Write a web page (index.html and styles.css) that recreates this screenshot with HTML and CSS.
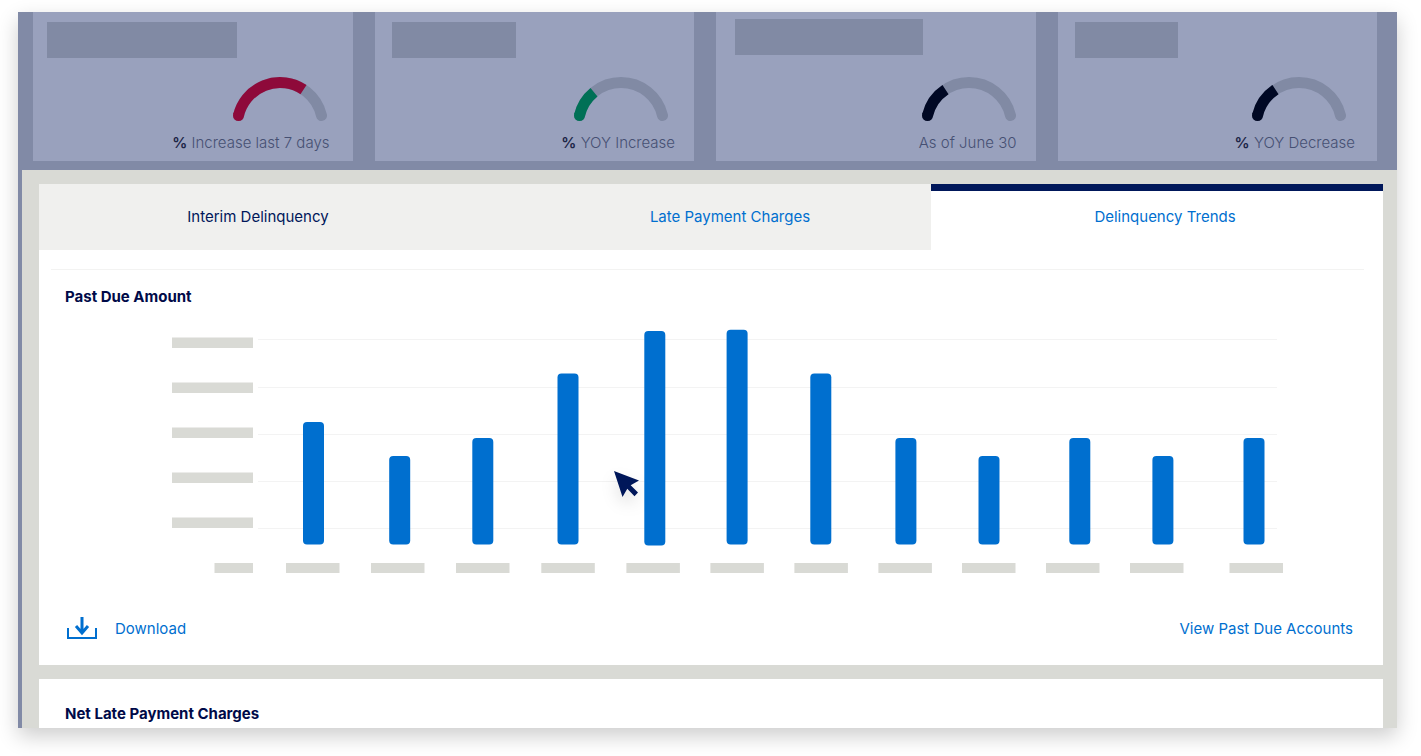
FILE: index.html
```html
<!DOCTYPE html>
<html lang="en">
<head>
<meta charset="utf-8">
<meta name="viewport" content="width=device-width, initial-scale=1">
<title>Delinquency Trends</title>
<link rel="stylesheet" href="styles.css">
</head>
<body>
<div class="frame">
  <section class="stats" aria-label="Summary">
    <article class="stat stat-first">
      <div class="placeholder placeholder-xl"></div>
      <svg class="gauge" viewBox="0 0 94 45" aria-hidden="true">
        <path class="track" d="M5.500 38.500A42.600 42.600 0 0 1 88.500 38.500"/>
        <path class="value red" d="M5.500 38.500A42.600 42.600 0 0 1 70.500 12.600"/>
        <circle class="red-fill" cx="5.500" cy="38.500" r="5.500"/>
      </svg>
      <p class="caption"><b>%</b> Increase last 7 days</p>
    </article>
    <article class="stat stat-second">
      <div class="placeholder placeholder-md"></div>
      <svg class="gauge" viewBox="0 0 94 45" aria-hidden="true">
        <path class="track" d="M5.500 38.500A42.600 42.600 0 0 1 88.500 38.500"/>
        <path class="value green" d="M5.500 38.500A42.600 42.600 0 0 1 20 15.200"/>
        <circle class="green-fill" cx="5.500" cy="38.500" r="5.500"/>
      </svg>
      <p class="caption"><b>%</b> YOY Increase</p>
    </article>
    <article class="stat stat-third">
      <div class="placeholder placeholder-lg"></div>
      <svg class="gauge" viewBox="0 0 94 45" aria-hidden="true">
        <path class="track" d="M5.500 38.500A42.600 42.600 0 0 1 88.500 38.500"/>
        <path class="value navy" d="M5.500 38.500A42.600 42.600 0 0 1 23.500 12.600"/>
        <circle class="navy-fill" cx="5.500" cy="38.500" r="5.500"/>
      </svg>
      <p class="caption">As of June 30</p>
    </article>
    <article class="stat stat-fourth">
      <div class="placeholder placeholder-sm"></div>
      <svg class="gauge" viewBox="0 0 94 45" aria-hidden="true">
        <path class="track" d="M5.500 38.500A42.600 42.600 0 0 1 88.500 38.500"/>
        <path class="value navy" d="M5.500 38.500A42.600 42.600 0 0 1 23.500 12.600"/>
        <circle class="navy-fill" cx="5.500" cy="38.500" r="5.500"/>
      </svg>
      <p class="caption"><b>%</b> YOY Decrease</p>
    </article>
  </section>

  <main class="content">
    <section class="panel">
      <div class="tabs" role="tablist">
        <button class="tab tab-interim" type="button" role="tab" aria-selected="false">Interim Delinquency</button>
        <button class="tab tab-late" type="button" role="tab" aria-selected="false">Late Payment Charges</button>
        <button class="tab tab-active" type="button" role="tab" aria-selected="true">Delinquency Trends</button>
      </div>
      <div class="report">
        <h2 class="title">Past Due Amount</h2>
        <svg class="chart" viewBox="172 324 1111 256" role="img" aria-label="Past due amount by month">
          <g class="grid">
            <path d="M258 339.500H1277M258 387.500H1277M258 434.500H1277M258 481.500H1277M258 528.500H1277"/>
          </g>
          <g class="label">
            <rect x="172" y="337.500" width="81" height="10.500"/>
            <rect x="172" y="382.500" width="81" height="10.500"/>
            <rect x="172" y="427.500" width="81" height="10.500"/>
            <rect x="172" y="472.500" width="81" height="10.500"/>
            <rect x="172" y="517.500" width="81" height="10.500"/>
            <rect x="214.500" y="563" width="38.500" height="10"/>
            <rect x="286" y="563" width="53.500" height="10"/>
            <rect x="371" y="563" width="53.500" height="10"/>
            <rect x="456" y="563" width="53.500" height="10"/>
            <rect x="541.300" y="563" width="53.500" height="10"/>
            <rect x="626.400" y="563" width="53.500" height="10"/>
            <rect x="710.400" y="563" width="53.500" height="10"/>
            <rect x="794.400" y="563" width="53.500" height="10"/>
            <rect x="878.400" y="563" width="53.500" height="10"/>
            <rect x="962" y="563" width="53.500" height="10"/>
            <rect x="1046" y="563" width="53.500" height="10"/>
            <rect x="1130" y="563" width="53.500" height="10"/>
            <rect x="1229.500" y="563" width="53.500" height="10"/>
          </g>
          <g class="bar">
            <rect x="303" y="422" width="21" height="122.500" rx="4"/>
            <rect x="389.200" y="456" width="21" height="88.500" rx="4"/>
            <rect x="472.300" y="438" width="21" height="106.500" rx="4"/>
            <rect x="557.500" y="373.400" width="21" height="171" rx="4"/>
            <rect x="644.300" y="331" width="21" height="214.500" rx="4"/>
            <rect x="726.600" y="329.700" width="21" height="214.700" rx="4"/>
            <rect x="810.300" y="373.400" width="21" height="171" rx="4"/>
            <rect x="895.400" y="438" width="21" height="106.500" rx="4"/>
            <rect x="978.500" y="456" width="21" height="88.500" rx="4"/>
            <rect x="1069.300" y="438" width="21" height="106.500" rx="4"/>
            <rect x="1152.400" y="456" width="21" height="88.500" rx="4"/>
            <rect x="1243.500" y="438" width="21" height="106.500" rx="4"/>
          </g>
          <path class="cursor" d="M614 471L639 480.500L630.700 485.200L638 492.500L634.500 496.300L627.300 488.800L622.500 497Z"/>
        </svg>
        <footer class="actions">
          <a class="link download" href="#download">
            <svg class="download-icon" viewBox="0 0 32 24" aria-hidden="true">
              <path class="tray" d="M2 11V21H30V11"/>
              <path class="arrow" d="M16 0V15M10 9L16 16L22 9"/>
            </svg>
            Download
          </a>
          <a class="link" href="#accounts">View Past Due Accounts</a>
        </footer>
      </div>
    </section>
    <section class="panel panel-next">
      <h2 class="title">Net Late Payment Charges</h2>
    </section>
  </main>
</div>
</body>
</html>
```
FILE: styles.css
```css
* {
  box-sizing: border-box;
}

body {
  margin: 0;
  padding: 12px 24px 28px 18px;
  background: #fff;
  color: #000a48;
  font-family: Inter, "Liberation Sans", sans-serif;
  font-size: 15px;
  line-height: 20px;
}

.frame {
  background: #818aa6;
  box-shadow: 0 8px 20px rgba(0, 0, 0, 0.2);
}

.stats {
  display: grid;
  grid-template-columns: repeat(4, 1fr);
  column-gap: 22px;
  padding: 0 20px 9px 15px;
}

.stat {
  display: flex;
  flex-direction: column;
  padding: 10px 19px 8px 17px;
  background: #99a1bd;
}

.stat-first {
  padding-left: 14px;
  padding-right: 23px;
}

.stat-third {
  padding-top: 7px;
  padding-left: 19px;
}

.stat-fourth {
  padding-right: 22px;
}

.placeholder {
  height: 36px;
  margin-bottom: 19px;
  background: #818aa4;
}

.placeholder-xl {
  width: 190px;
}

.placeholder-lg {
  width: 188px;
}

.placeholder-md {
  width: 124px;
}

.placeholder-sm {
  width: 103px;
}

.gauge {
  width: 94px;
  height: 45px;
  margin-top: auto;
  margin-right: 3px;
  align-self: flex-end;
}

.stat-second .gauge {
  margin-right: 7px;
}

.stat-third .gauge {
  margin-right: 1px;
}

.stat-fourth .gauge {
  margin-right: 9px;
}

.track,
.value {
  fill: none;
  stroke-width: 11;
}

.track {
  stroke: #818aa4;
  stroke-linecap: round;
}

.red { stroke: #8e0a3a; }
.green { stroke: #007056; }
.navy { stroke: #000824; }
.red-fill { fill: #8e0a3a; }
.green-fill { fill: #007056; }
.navy-fill { fill: #000824; }

.caption {
  margin: 11px 0 0;
  color: #465073;
  font-weight: 300;
  text-align: right;
}

.caption b {
  color: #1c2547;
  font-weight: 600;
}

.content {
  margin-left: 4px;
  padding: 14px 14px 0 17px;
  background: #d9dad5;
}

.panel {
  background: #fff;
}

.tabs {
  display: grid;
  grid-template-columns: 438fr 454fr 452fr;
}

.tab {
  height: 66px;
  padding: 0;
  border: 0;
  background: #f0f0ee;
  color: #006fcf;
  font: inherit;
}

.tab-interim {
  color: #00175a;
}

.tab-late {
  padding-left: 52px;
}

.tab-active {
  padding: 0 0 7px 16px;
  border-top: 7px solid #00175a;
  background: #fff;
}

.report {
  margin: 19px 19px 0 12px;
  padding: 17px 11px 24px 14px;
  border-top: 1px solid #f3f3f2;
}

.title {
  margin: 0;
  font-size: 15px;
  font-weight: 700;
  line-height: 20px;
}

.chart {
  display: block;
  width: calc(100% - 177px);
  margin: 17px 0 0 107px;
}

.grid {
  stroke: #f3f3f3;
}

.label {
  fill: #d9dad5;
}

.bar {
  fill: #006fcf;
}

.cursor {
  fill: #00175a;
  filter: drop-shadow(0 8px 8px rgba(0, 0, 0, 0.12));
}

.actions {
  display: flex;
  align-items: center;
  justify-content: space-between;
  margin-top: 37px;
}

.link {
  color: #006fcf;
  text-decoration: none;
}

.download {
  display: flex;
  align-items: center;
  gap: 17px;
  padding-left: 1px;
}

.download-icon {
  width: 32px;
  height: 24px;
  fill: none;
  stroke: #006fcf;
  stroke-width: 2;
}

.arrow {
  stroke-width: 3;
}

.panel-next {
  margin-top: 14px;
  padding: 25px 26px 4px;
}
```
